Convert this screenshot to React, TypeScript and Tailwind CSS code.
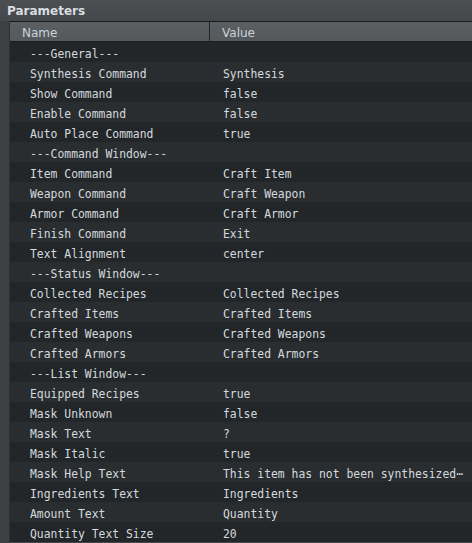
import React from "react";

type Row = { name: string; value?: string; group?: boolean };

const rows: Row[] = [
  { name: "---General---", group: true },
  { name: "Synthesis Command", value: "Synthesis" },
  { name: "Show Command", value: "false" },
  { name: "Enable Command", value: "false" },
  { name: "Auto Place Command", value: "true" },
  { name: "---Command Window---", group: true },
  { name: "Item Command", value: "Craft Item" },
  { name: "Weapon Command", value: "Craft Weapon" },
  { name: "Armor Command", value: "Craft Armor" },
  { name: "Finish Command", value: "Exit" },
  { name: "Text Alignment", value: "center" },
  { name: "---Status Window---", group: true },
  { name: "Collected Recipes", value: "Collected Recipes" },
  { name: "Crafted Items", value: "Crafted Items" },
  { name: "Crafted Weapons", value: "Crafted Weapons" },
  { name: "Crafted Armors", value: "Crafted Armors" },
  { name: "---List Window---", group: true },
  { name: "Equipped Recipes", value: "true" },
  { name: "Mask Unknown", value: "false" },
  { name: "Mask Text", value: "?" },
  { name: "Mask Italic", value: "true" },
  { name: "Mask Help Text", value: "This item has not been synthesized\u22EF" },
  { name: "Ingredients Text", value: "Ingredients" },
  { name: "Amount Text", value: "Quantity" },
  { name: "Quantity Text Size", value: "20" },
];

export default function App() {
  return (
    <div
      className="w-[472px] h-[543px] overflow-hidden bg-[#43474a] text-[#d3dade] flex flex-col"
      style={{ fontFamily: "'DejaVu Sans', sans-serif" }}
    >
      <div className="h-[21px] shrink-0 pl-[7px] pt-[2px] text-[12px] font-bold leading-[18px] text-[#d8dde0] bg-gradient-to-b from-[#4b4f52] to-[#44484b]">
        Parameters
      </div>
      <div className="flex flex-1 min-h-0">
        <div className="w-[10px] shrink-0 bg-[#3d4043] border-r border-[#2f3235]" />
        <div className="flex-1 min-w-0 border-t border-[#1a1c1e] flex flex-col">
          <div className="h-[20px] shrink-0 flex bg-gradient-to-b from-[#5b5f62] to-[#55595c] border-b border-[#1c1e20] text-[12px] text-[#c9d3da]">
            <div className="w-[200px] shrink-0 pl-[12px] pt-[4px] leading-[15px] border-r border-[#232528]">Name</div>
            <div className="flex-1 pl-[12px] pt-[4px] leading-[15px]">Value</div>
          </div>
          <div
            className="flex flex-col text-[11.4px]"
            style={{ fontFamily: "'DejaVu Sans Mono', monospace" }}
          >
            {rows.map((r, i) => (
              <div
                key={i}
                className={`h-[20px] flex pt-[4px] leading-[16px] whitespace-nowrap ${
                  i % 2 === 0 ? "bg-[#232629]" : "bg-[#2a2d30]"
                }`}
              >
                <div className="w-[201px] shrink-0 pl-[20px] overflow-hidden">{r.name}</div>
                <div className="flex-1 pl-[12px] overflow-hidden">{r.value ?? ""}</div>
              </div>
            ))}
          </div>
        </div>
      </div>
    </div>
  );
}
